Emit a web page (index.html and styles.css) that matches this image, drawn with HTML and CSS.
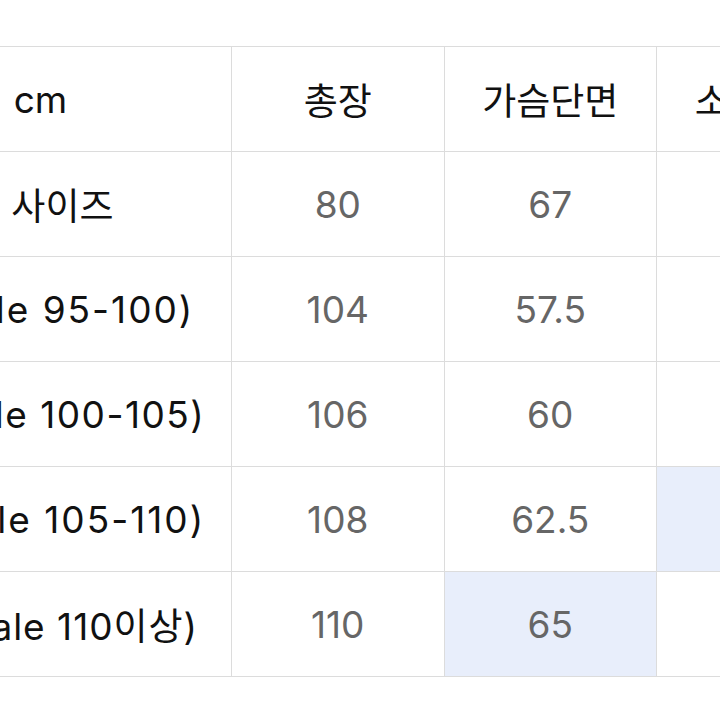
FILE: index.html
```html
<!DOCTYPE html>
<html lang="ko">
<head>
<meta charset="utf-8">
<title>사이즈표</title>
<link rel="stylesheet" href="styles.css">
</head>
<body>
<div class="viewport">
  <table class="size-table">
    <colgroup>
      <col class="col-label">
      <col class="col-val">
      <col class="col-val">
      <col class="col-val">
      <col class="col-val">
    </colgroup>
    <thead>
      <tr>
        <th class="label">cm</th>
        <th>총장</th>
        <th>가슴단면</th>
        <th>소매길이</th>
        <th>어깨너비</th>
      </tr>
    </thead>
    <tbody>
      <tr>
        <td class="label">M 사이즈</td>
        <td>80</td>
        <td>67</td>
        <td>60</td>
        <td>50</td>
      </tr>
      <tr>
        <td class="label ls-wide">L (Male 95-100)</td>
        <td>104</td>
        <td>57.5</td>
        <td>61</td>
        <td>47</td>
      </tr>
      <tr>
        <td class="label ls-mid">M (Male 100-105)</td>
        <td>106</td>
        <td>60</td>
        <td>62</td>
        <td>49</td>
      </tr>
      <tr>
        <td class="label ls-wide">M (Male 105-110)</td>
        <td>108</td>
        <td>62.5</td>
        <td class="hl">63</td>
        <td>51</td>
      </tr>
      <tr>
        <td class="label ls-narrow">XL (Male 110이상)</td>
        <td>110</td>
        <td class="hl">65</td>
        <td>64</td>
        <td>53</td>
      </tr>
    </tbody>
  </table>
</div>
</body>
</html>
```

FILE: styles.css
```css
html, body {
  margin: 0;
  padding: 0;
  background: #ffffff;
}

.viewport {
  width: 720px;
  height: 720px;
  overflow: hidden;
  padding-top: 46px;
  box-sizing: border-box;
}

.size-table {
  border-collapse: collapse;
  table-layout: fixed;
  width: 1232px;
  margin-left: -151px;
  font-family: Inter, "Noto Sans CJK KR", "Liberation Sans", sans-serif;
  font-size: 37px;
}

.col-label { width: 382px; }
.col-val { width: 212.5px; }

.size-table th,
.size-table td {
  height: 104px;
  padding: 0;
  border: 1px solid #dcdcdc;
  text-align: center;
  vertical-align: middle;
  white-space: nowrap;
  overflow: hidden;
}

.size-table th {
  font-weight: 400;
  color: #111111;
}

.size-table td {
  color: #666666;
}

.size-table .label {
  color: #111111;
}

.size-table td.ls-wide {
  letter-spacing: 2px;
}

.size-table td.ls-mid {
  letter-spacing: 1.5px;
}

.size-table td.ls-narrow {
  letter-spacing: 1px;
}

.size-table td.hl {
  background: #e8eefb;
}
```
